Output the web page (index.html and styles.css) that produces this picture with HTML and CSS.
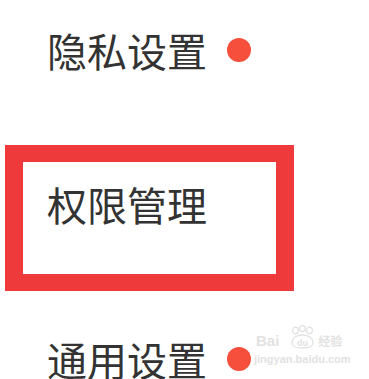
FILE: index.html
```html
<!DOCTYPE html>
<html lang="zh-CN">
<head>
<meta charset="utf-8">
<link rel="stylesheet" href="styles.css">
</head>
<body>
<div class="page">
  <div class="row row-first">
    <span class="label">隐私设置</span>
    <span class="dot"></span>
  </div>
  <div class="highlight">
    <span class="label">权限管理</span>
  </div>
  <div class="row row-last">
    <span class="label">通用设置</span>
    <span class="dot"></span>
  </div>
  <div class="watermark">
    <div class="wm-top">
      <span class="wm-bai">Bai</span>
      <svg class="wm-paw" width="27" height="24" viewBox="0 0 27 24">
        <g fill="none" stroke="#e2e2e2" stroke-width="1.3">
          <ellipse cx="6.5" cy="5.5" rx="2.8" ry="3.4"/>
          <ellipse cx="13.5" cy="3.6" rx="2.8" ry="3"/>
          <ellipse cx="20.5" cy="5.5" rx="2.8" ry="3.4"/>
          <path d="M3 18 C3 12 9 10 13.5 10 C18 10 24 12 24 18 C24 22 20 23 13.5 23 C7 23 3 22 3 18 Z"/>
        </g>
        <text x="13.5" y="20.5" font-size="9" fill="#e2e2e2" text-anchor="middle" font-family="Liberation Sans, sans-serif" font-weight="bold">du</text>
      </svg>
      <span class="wm-cn">经验</span>
    </div>
    <div class="wm-url">jingyan.baidu.com</div>
  </div>
</div>
</body>
</html>
```
FILE: styles.css
```css
html, body {
  margin: 0;
  padding: 0;
  background: #ffffff;
}
.page {
  position: relative;
  width: 369px;
  height: 379px;
  overflow: hidden;
  display: flex;
  flex-direction: column;
  font-family: "Noto Sans CJK SC", "Noto Sans", sans-serif;
  color: #333333;
}
.label {
  font-size: 40px;
  line-height: 40px;
  white-space: nowrap;
}
.row {
  display: flex;
  align-items: center;
  gap: 20px;
  padding-left: 47px;
}
.row-first {
  margin-top: 30px;
}
.row-last {
  margin-top: 48px;
}
.dot {
  width: 24px;
  height: 24px;
  border-radius: 50%;
  background: #f64f3b;
}
.highlight {
  box-sizing: border-box;
  margin-top: 75px;
  margin-left: 5px;
  width: 289px;
  height: 146px;
  border-style: solid;
  border-color: #ee3a3a;
  border-width: 17px 18px 17px 18px;
  padding: 22px 0 0 24px;
}
.watermark {
  position: absolute;
  left: 254px;
  top: 325px;
  color: #e2e2e2;
  font-family: "Liberation Sans", sans-serif;
}
.wm-top {
  display: flex;
  align-items: flex-end;
  gap: 2px;
  padding-left: 2px;
}
.wm-bai {
  font-size: 15px;
  line-height: 17px;
  font-weight: bold;
  margin-right: 8px;
}
.wm-cn {
  font-family: "Noto Sans CJK SC", sans-serif;
  font-size: 12px;
  line-height: 17px;
  font-weight: bold;
}
.wm-url {
  font-size: 11px;
  line-height: 13px;
  font-weight: bold;
  margin-top: 4px;
}
```
